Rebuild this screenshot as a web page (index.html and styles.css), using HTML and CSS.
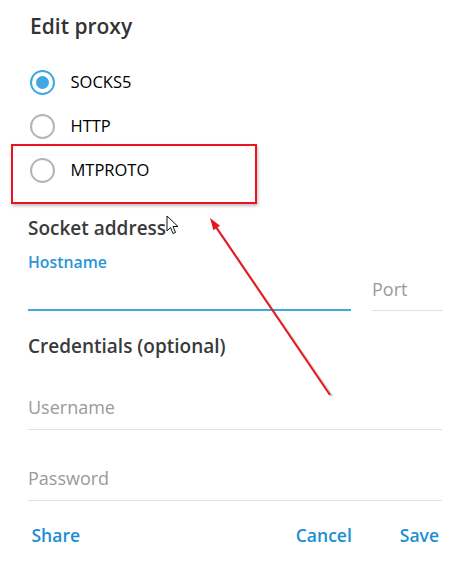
FILE: index.html
```html
<!DOCTYPE html>
<html>
<head>
<meta charset="utf-8">
<link rel="stylesheet" href="styles.css">
</head>
<body>
<div class="dialog">
  <div class="title">Edit proxy</div>
  <div class="radios">
    <div class="radio-row"><span class="radio checked"></span><span class="radio-label">SOCKS5</span></div>
    <div class="radio-row"><span class="radio"></span><span class="radio-label">HTTP</span></div>
    <div class="radio-row"><span class="radio"></span><span class="radio-label">MTPROTO</span></div>
  </div>
  <div class="section">Socket address</div>
  <div class="fields-row">
    <div class="field host">
      <div class="float-label">Hostname</div>
      <div class="input-space"></div>
    </div>
    <div class="field port"><span class="placeholder">Port</span></div>
  </div>
  <div class="section creds">Credentials (optional)</div>
  <div class="field wide first"><span class="placeholder">Username</span></div>
  <div class="field wide second"><span class="placeholder">Password</span></div>
  <div class="actions">
    <span class="btn">Share</span>
    <span class="btn cancel">Cancel</span>
    <span class="btn save">Save</span>
  </div>

  <div class="highlight"></div>
  <svg class="cursor" width="14" height="20" viewBox="0 0 14 20">
    <path d="M1 1 L1 16 L4.5 12.5 L7 18.5 L9.5 17.5 L7 11.5 L12 11.5 Z" fill="#fff" stroke="#111" stroke-width="1" stroke-linejoin="round"/>
  </svg>
  <svg class="annot" width="467" height="569" viewBox="0 0 467 569">
    <line x1="332" y1="396" x2="215" y2="226" stroke="rgba(0,0,0,0.18)" stroke-width="2.5"/>
    <line x1="330" y1="395" x2="214" y2="224" stroke="#e8161c" stroke-width="2"/>
    <polygon points="210,218 220,225.7 213.4,230.2" fill="#e8161c"/>
  </svg>
</div>
</body>
</html>
```

FILE: styles.css
```css
html, body {
  margin: 0;
  padding: 0;
  background: #ffffff;
}
body {
  font-family: "Open Sans", "Liberation Sans", sans-serif;
}
.dialog {
  position: relative;
  width: 467px;
  height: 569px;
  box-sizing: border-box;
  padding: 12px 24px 0 28px;
  background: #fff;
}
.title {
  height: 28px;
  line-height: 28px;
  font-size: 21px;
  font-weight: 600;
  color: #333333;
  padding-left: 2px;
}
.radios {
  margin-top: 20px;
}
.radio-row {
  display: flex;
  align-items: center;
  height: 44px;
}
.radio {
  width: 21px;
  height: 21px;
  border: 2.6px solid #b5b5b5;
  border-radius: 50%;
  margin-left: 2px;
  position: relative;
  flex: none;
}
.radio.checked {
  border-color: #40a7e3;
}
.radio.checked::after {
  content: "";
  position: absolute;
  left: 4px;
  top: 4px;
  width: 13px;
  height: 13px;
  border-radius: 50%;
  background: #40a7e3;
}
.radio-label {
  margin-left: 15.5px;
  font-size: 16.5px;
  color: #000;
  line-height: 20px;
}
.section {
  margin-top: 22px;
  height: 28px;
  line-height: 28px;
  font-size: 19px;
  font-weight: 600;
  color: #3a3a3a;
}
.fields-row {
  display: flex;
  align-items: flex-end;
  margin-top: 10px;
}
.float-label {
  height: 20px;
  line-height: 20px;
  font-size: 15.8px;
  font-weight: 600;
  color: #2a95d8;
}
.field.host {
  width: 323px;
  border-bottom: 2px solid #40a7e3;
}
.input-space {
  height: 37px;
}
.field.port {
  margin-left: 21px;
  width: 71px;
  padding-bottom: 11px;
  border-bottom: 1px solid #e2e2e2;
}
.placeholder {
  display: block;
  height: 20px;
  line-height: 20px;
  font-size: 18px;
  color: #9a9a9a;
}
.section.creds {
  margin-top: 21px;
}
.field.wide {
  width: 414px;
  padding-bottom: 12px;
  border-bottom: 1px solid #e2e2e2;
}
.field.wide.first {
  margin-top: 37px;
}
.field.wide.second {
  margin-top: 38px;
}
.actions {
  display: flex;
  margin-top: 22px;
  padding: 0 4px 0 3.5px;
  height: 24px;
  line-height: 24px;
}
.btn {
  font-size: 17.5px;
  font-weight: 600;
  color: #1b8fd2;
}
.btn.cancel {
  margin-left: auto;
}
.btn.save {
  margin-left: 48px;
}
.highlight {
  position: absolute;
  left: 11px;
  top: 144px;
  width: 242px;
  height: 56px;
  border: 2.5px solid #e8161c;
  box-shadow: 1px 2px 3px rgba(0,0,0,0.25);
}
.cursor {
  position: absolute;
  left: 166px;
  top: 215px;
}
.annot {
  position: absolute;
  left: 0;
  top: 0;
  pointer-events: none;
}
```
